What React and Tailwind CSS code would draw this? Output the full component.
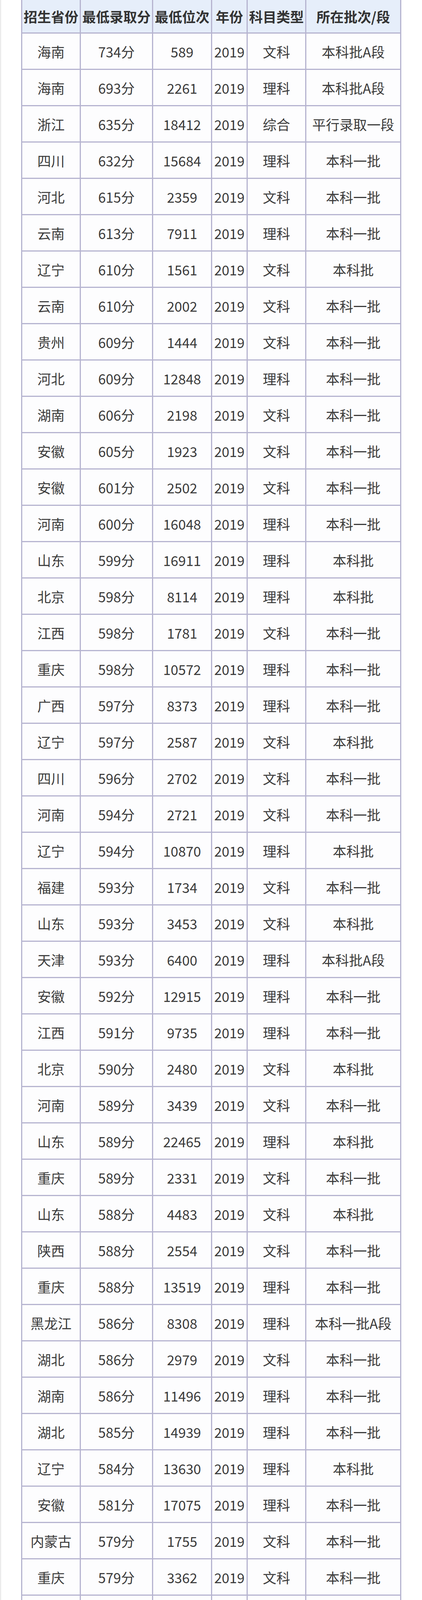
const ROWS = [
  ["海南", "734分", "589", "文科", "本科批A段"],
  ["海南", "693分", "2261", "理科", "本科批A段"],
  ["浙江", "635分", "18412", "综合", "平行录取一段"],
  ["四川", "632分", "15684", "理科", "本科一批"],
  ["河北", "615分", "2359", "文科", "本科一批"],
  ["云南", "613分", "7911", "理科", "本科一批"],
  ["辽宁", "610分", "1561", "文科", "本科批"],
  ["云南", "610分", "2002", "文科", "本科一批"],
  ["贵州", "609分", "1444", "文科", "本科一批"],
  ["河北", "609分", "12848", "理科", "本科一批"],
  ["湖南", "606分", "2198", "文科", "本科一批"],
  ["安徽", "605分", "1923", "文科", "本科一批"],
  ["安徽", "601分", "2502", "文科", "本科一批"],
  ["河南", "600分", "16048", "理科", "本科一批"],
  ["山东", "599分", "16911", "理科", "本科批"],
  ["北京", "598分", "8114", "理科", "本科批"],
  ["江西", "598分", "1781", "文科", "本科一批"],
  ["重庆", "598分", "10572", "理科", "本科一批"],
  ["广西", "597分", "8373", "理科", "本科一批"],
  ["辽宁", "597分", "2587", "文科", "本科批"],
  ["四川", "596分", "2702", "文科", "本科一批"],
  ["河南", "594分", "2721", "文科", "本科一批"],
  ["辽宁", "594分", "10870", "理科", "本科批"],
  ["福建", "593分", "1734", "文科", "本科一批"],
  ["山东", "593分", "3453", "文科", "本科批"],
  ["天津", "593分", "6400", "理科", "本科批A段"],
  ["安徽", "592分", "12915", "理科", "本科一批"],
  ["江西", "591分", "9735", "理科", "本科一批"],
  ["北京", "590分", "2480", "文科", "本科批"],
  ["河南", "589分", "3439", "文科", "本科一批"],
  ["山东", "589分", "22465", "理科", "本科批"],
  ["重庆", "589分", "2331", "文科", "本科一批"],
  ["山东", "588分", "4483", "文科", "本科批"],
  ["陕西", "588分", "2554", "文科", "本科一批"],
  ["重庆", "588分", "13519", "理科", "本科一批"],
  ["黑龙江", "586分", "8308", "理科", "本科一批A段"],
  ["湖北", "586分", "2979", "文科", "本科一批"],
  ["湖南", "586分", "11496", "理科", "本科一批"],
  ["湖北", "585分", "14939", "理科", "本科一批"],
  ["辽宁", "584分", "13630", "理科", "本科批"],
  ["安徽", "581分", "17075", "理科", "本科一批"],
  ["内蒙古", "579分", "1755", "文科", "本科一批"],
  ["重庆", "579分", "3362", "文科", "本科一批"],
  ["广西", "578分", "1849", "文科", "本科一批"],
  ["黑龙江", "578分", "1141", "文科", "本科一批A段"],
  ["陕西", "578分", "12574", "理科", "本科一批"],
  ["内蒙古", "576分", "6430", "理科", "本科提前批"],
  ["新疆", "574分", "890", "文科", "本科一批"],
  ["吉林", "573分", "9154", "理科", "本科一批A段"],
  ["福建", "572分", "9183", "理科", "本科一批"],
  ["贵州", "572分", "8101", "理科", "本科一批"],
  ["湖北", "572分", "19634", "理科", "本科一批"],
  ["山西", "572分", "1790", "文科", "本科一批A段"],
  ["天津", "571分", "1315", "文科", "本科批A段"],
  ["吉林", "570分", "1638", "文科", "本科一批A段"],
  ["山西", "567分", "9593", "理科", "本科一批A段"],
  ["广东", "565分", "10947", "文科", "本科批"],
  ["山西", "565分", "2476", "文科", "本科一批A1段"],
  ["新疆", "559分", "3889", "理科", "本科一批"],
  ["西藏", "558分", "-", "文科", "本科一批"],
  ["广东", "557分", "25458", "理科", "本科批"],
  ["甘肃", "552分", "8549", "理科", "本科一批"],
  ["河南", "552分", "50338", "理科", "本科一批"],
  ["内蒙古", "548分", "10708", "理科", "本科一批"],
  ["内蒙古", "548分", "4231", "文科", "本科提前批A段", true],
  ["山西", "548分", "14942", "理科", "本科一批A1段"],
  ["内蒙古", "532分", "13851", "理科", "本科提前批A段", true],
  ["宁夏", "532分", "3377", "理科", "本科一批"],
  ["上海", "525分", "9965", "综合", "本科批"],
  ["上海", "524分", "10177", "综合", "本科批"],
  ["青海", "491分", "3077", "理科", "本科一批"],
  ["青海", "462分", "4804", "理科", "本科一批"],
  ["西藏", "408分", "-", "文科", "本科一批"],
  ["江苏", "373分", "21071", "理科", "本科一批"],
  ["江苏", "365分", "4525", "文科", "本科一批"],
  ["江苏", "363分", "36449", "理科", "本科一批"],
  ["江苏", "354分", "8892", "文科", "本科一批"],
];

const HEAD = ["招生省份", "最低录取分", "最低位次", "年份", "科目类型", "所在批次/段"];
const WIDTHS = ["w-[150px]", "w-[185px]", "w-[151px]", "w-[91px]", "w-[150px]", "w-[243px]"];

function Cell({ i, children }) {
  return (
    <div
      className={`${WIDTHS[i]} shrink-0 flex items-center justify-center text-center whitespace-nowrap border-r-[3px] border-[#b6b4d0]`}
    >
      {children}
    </div>
  );
}

function Row({ row }) {
  const [prov, score, rank, type, batch, tall] = row;
  return (
    <div className={`flex shrink-0 border-b-[3px] border-[#b6b4d0] bg-[#fdfdfe] ${tall ? "h-[183px]" : "h-[93px]"}`}>
      <Cell i={0}>{prov}</Cell>
      <Cell i={1}>{score}</Cell>
      <Cell i={2}>{rank}</Cell>
      <Cell i={3}>2019</Cell>
      <Cell i={4}>{type}</Cell>
      <Cell i={5}>
        {tall ? (
          <span>
            {batch.slice(0, -1)}
            <br />
            {batch.slice(-1)}
          </span>
        ) : (
          batch
        )}
      </Cell>
    </div>
  );
}

export default function App() {
  return (
    <div className="h-screen overflow-hidden bg-white border-l-[3px] border-[#ececec] pl-[51px] font-['Noto_Sans_CJK_SC',sans-serif] text-[35px] leading-[87px] text-[#3b3b3b]">
      <div className="w-[973px] h-full flex flex-col border-l-[3px] border-[#b6b4d0] bg-[#fdfdfe]">
        <div className="flex shrink-0 h-[86px] border-b-[3px] border-[#b6b4d0] bg-[#e6eefa] font-bold text-[#333]">
          {HEAD.map((h, i) => (
            <Cell key={h} i={i}>
              {h}
            </Cell>
          ))}
        </div>
        {ROWS.map((r, idx) => (
          <Row key={idx} row={r} />
        ))}
        <div className="flex flex-1">
          {WIDTHS.map((w, i) => (
            <Cell key={i} i={i} />
          ))}
        </div>
      </div>
    </div>
  );
}
